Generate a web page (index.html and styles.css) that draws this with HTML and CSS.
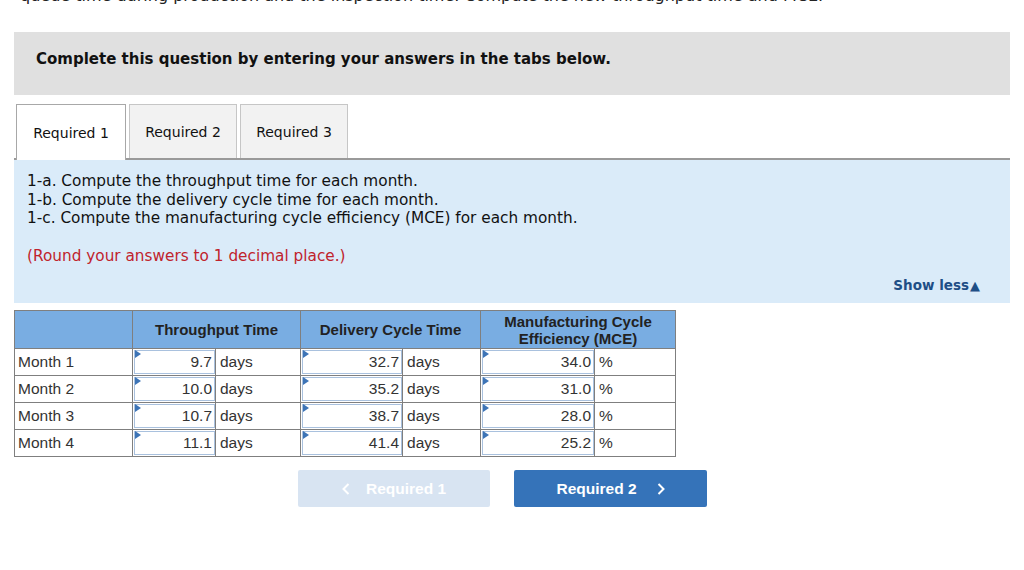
FILE: index.html
```html
<!DOCTYPE html>
<html>
<head>
<meta charset="utf-8">
<link rel="stylesheet" href="styles.css">
</head>
<body>
<div class="page">
  <p class="cut">queue time during production and the inspection time. Compute the new throughput time and MCE.</p>
  <div class="notice">Complete this question by entering your answers in the tabs below.</div>
  <div class="tabs">
    <div class="tab active">Required 1</div>
    <div class="tab">Required 2</div>
    <div class="tab">Required 3</div>
  </div>
  <div class="panel">
    <p class="req">1-a. Compute the throughput time for each month.<br>1-b. Compute the delivery cycle time for each month.<br>1-c. Compute the manufacturing cycle efficiency (MCE) for each month.</p>
    <p class="round">(Round your answers to 1 decimal place.)</p>
    <div class="showless">Show less<span class="tri">&#9650;</span></div>
  </div>
  <table class="grid">
    <colgroup>
      <col class="c-label"><col class="c-in1"><col class="c-u1"><col class="c-in2"><col class="c-u2"><col class="c-in3"><col class="c-u3">
    </colgroup>
    <thead>
      <tr>
        <th></th>
        <th colspan="2">Throughput Time</th>
        <th colspan="2">Delivery Cycle Time</th>
        <th colspan="2">Manufacturing Cycle<br>Efficiency (MCE)</th>
      </tr>
    </thead>
    <tbody>
      <tr>
        <td class="label">Month 1</td>
        <td class="inp"><div class="box">9.7</div></td><td class="unit">days</td>
        <td class="inp"><div class="box">32.7</div></td><td class="unit">days</td>
        <td class="inp"><div class="box">34.0</div></td><td class="unit">%</td>
      </tr>
      <tr>
        <td class="label">Month 2</td>
        <td class="inp"><div class="box">10.0</div></td><td class="unit">days</td>
        <td class="inp"><div class="box">35.2</div></td><td class="unit">days</td>
        <td class="inp"><div class="box">31.0</div></td><td class="unit">%</td>
      </tr>
      <tr>
        <td class="label">Month 3</td>
        <td class="inp"><div class="box">10.7</div></td><td class="unit">days</td>
        <td class="inp"><div class="box">38.7</div></td><td class="unit">days</td>
        <td class="inp"><div class="box">28.0</div></td><td class="unit">%</td>
      </tr>
      <tr>
        <td class="label">Month 4</td>
        <td class="inp"><div class="box">11.1</div></td><td class="unit">days</td>
        <td class="inp"><div class="box">41.4</div></td><td class="unit">days</td>
        <td class="inp"><div class="box">25.2</div></td><td class="unit">%</td>
      </tr>
    </tbody>
  </table>
  <div class="nav">
    <button class="btn disabled"><svg class="chev" width="8" height="12" viewBox="0 0 8 12"><polyline points="6.5,1 1.5,6 6.5,11" fill="none" stroke="#ffffff" stroke-width="2"/></svg><span>Required 1</span></button>
    <button class="btn primary"><span>Required 2</span><svg class="chev" width="8" height="12" viewBox="0 0 8 12"><polyline points="1.5,1 6.5,6 1.5,11" fill="none" stroke="#ffffff" stroke-width="2"/></svg></button>
  </div>
</div>
</body>
</html>
```
FILE: styles.css
```css
html, body {
  margin: 0;
  padding: 0;
  background: #ffffff;
}
body {
  font-family: "DejaVu Sans", Verdana, sans-serif;
  color: #000;
  overflow: hidden;
  height: 570px;
}
.page {
  padding: 0 14px;
  width: 996px;
}
.cut {
  margin: -13px 0 0 6px;
  font-size: 16px;
  line-height: 18px;
  color: #222;
  white-space: nowrap;
}
.notice {
  margin-top: 27px;
  height: 63px;
  box-sizing: border-box;
  background: #e0e0e0;
  padding: 18px 0 0 22px;
  font-weight: bold;
  font-size: 15px;
  line-height: 18px;
  color: #111;
}
.tabs {
  margin-top: 9px;
  display: flex;
  gap: 3px;
  padding-left: 2px;
  border-bottom: 2px solid #9a9a9a;
  height: 54px;
}
.tab {
  box-sizing: border-box;
  height: 54px;
  width: 108px;
  border: 1px solid #c6c6c6;
  border-bottom: none;
  background: #f2f2f2;
  display: flex;
  align-items: center;
  justify-content: center;
  font-size: 14px;
  color: #111;
}
.tab.active {
  width: 110px;
  background: #ffffff;
  border-color: #a8a8a8;
  height: 56px;
  margin-bottom: -2px;
}
.panel {
  background: #daebf9;
  height: 143px;
  box-sizing: border-box;
  padding: 12px 13px 0 13px;
  display: flex;
  flex-direction: column;
}
.req {
  margin: 0;
  font-size: 15.3px;
  line-height: 18.5px;
  color: #111;
}
.round {
  margin: 19px 0 0 0;
  font-size: 15.3px;
  line-height: 18.5px;
  color: #c0232c;
}
.showless {
  align-self: flex-end;
  margin-top: 12px;
  margin-right: 17px;
  font-weight: bold;
  font-size: 13.5px;
  color: #1e4e86;
}
.showless .tri {
  font-size: 13px;
  margin-left: 1px;
}
.grid {
  margin-top: 7px;
  border-collapse: collapse;
  table-layout: fixed;
  width: 662px;
  font-family: "Liberation Sans", Arial, sans-serif;
  font-size: 15.5px;
}
.c-label { width: 118px; }
.c-in1 { width: 83px; }
.c-u1 { width: 85px; }
.c-in2 { width: 102px; }
.c-u2 { width: 78px; }
.c-in3 { width: 114px; }
.c-u3 { width: 81px; }
.grid th {
  background: #79ade2;
  border: 1px solid #7f7f7f;
  height: 37px;
  padding: 0 2px;
  font-size: 15px;
  line-height: 17px;
  color: #222;
  font-weight: bold;
}
.grid td {
  border: 1px solid #7f7f7f;
  height: 26.5px;
  box-sizing: border-box;
  padding: 0;
  color: #333;
  white-space: nowrap;
  line-height: 18px;
}
.grid td.label {
  padding-left: 3px;
}
.grid td.inp {
  padding: 1px 0 1px 1px;
}
.box {
  position: relative;
  box-sizing: border-box;
  height: 24px;
  border: 1px solid #a9c1de;
  text-align: right;
  padding-right: 2px;
  line-height: 22px;
}
.box::before {
  content: "";
  position: absolute;
  left: 0;
  top: -1px;
  width: 0;
  height: 0;
  border-top: 4px solid transparent;
  border-bottom: 4px solid transparent;
  border-left: 6px solid #3d74b6;
}
.grid td.unit {
  padding-left: 4px;
}
.nav {
  margin-top: 13px;
  padding-left: 284px;
  display: flex;
  gap: 24px;
}
.btn {
  width: 193px;
  height: 37px;
  border: none;
  border-radius: 2px;
  display: flex;
  align-items: center;
  justify-content: center;
  gap: 16px;
  font-family: "Liberation Sans", Arial, sans-serif;
  font-weight: bold;
  font-size: 15.5px;
  color: #ffffff;
  padding: 0;
}
.btn.disabled {
  width: 192px;
  background: #d8e4f2;
}
.btn.primary {
  background: #3573b9;
  gap: 20px;
}
.chev {
  display: block;
}
```
